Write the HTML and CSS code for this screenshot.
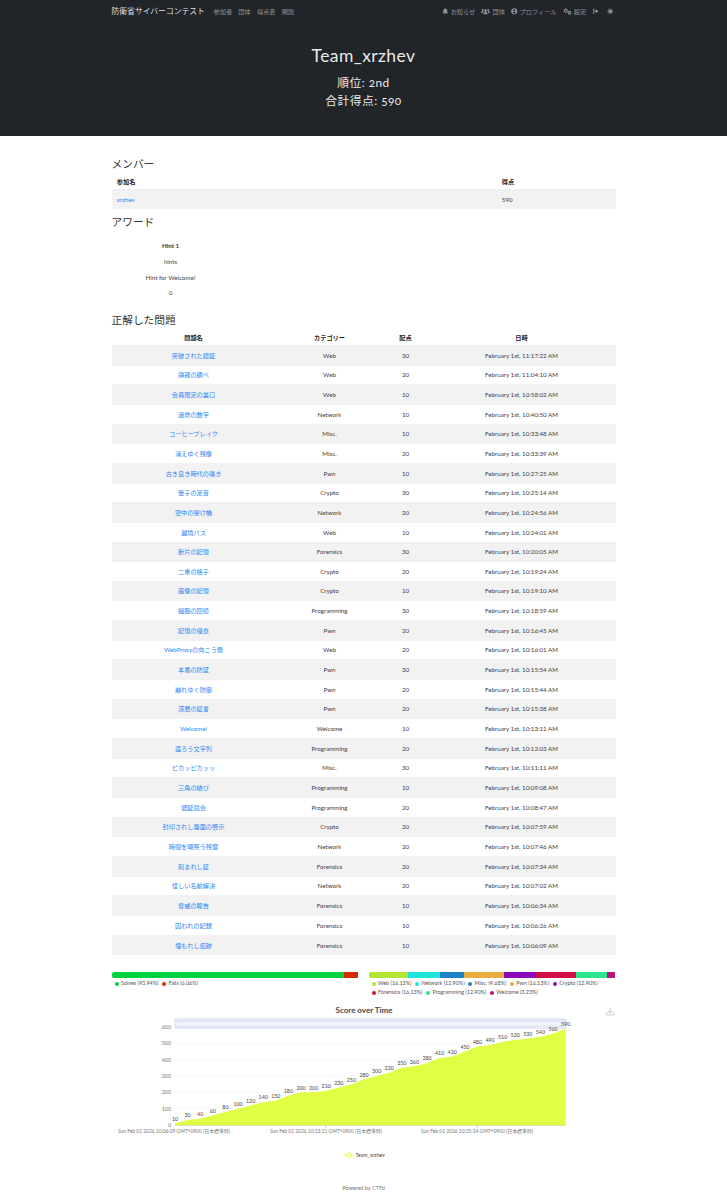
FILE: index.html
```html
<!DOCTYPE html>
<html lang="ja">
<head>
<meta charset="utf-8">
<title>Team_xrzhev</title>
<link rel="stylesheet" href="styles.css">
</head>
<body>
<header class="top">
  <nav class="nav container">
    <a class="brand">防衛省サイバーコンテスト</a>
    <a class="link first">参加者</a>
    <a class="link">団体</a>
    <a class="link">得点表</a>
    <a class="link">問題</a>
    <span class="spacer"></span>
    <a class="link"><svg class="icon" viewBox="0 0 8 8"><path d="M4 0a.6.6 0 0 1 .6.6v.4C6 1.3 6.4 2.4 6.4 3.6c0 1.3.4 1.8 1 2.4v.5H.6V6c.6-.6 1-1.1 1-2.4C1.6 2.4 2 1.3 3.4 1V.6A.6.6 0 0 1 4 0zM3.1 7h1.8a.9.9 0 0 1-1.8 0z"/></svg>お知らせ</a>
    <a class="link"><svg class="icon wide" viewBox="0 0 10 8"><circle cx="5" cy="3" r="1.5"/><circle cx="1.8" cy="2.2" r="1.1"/><circle cx="8.2" cy="2.2" r="1.1"/><path d="M2.6 7V6.2C2.6 5.2 3.4 4.8 5 4.8s2.4.4 2.4 1.4V7zM0 5.6V4.8c0-.8.6-1.1 1.8-1.1.4 0 .7 0 1 .2-.5.4-.9 1-.9 1.7zM10 5.6V4.800c0-.8-.6-1.100-1.800-1.100-.4 0-.7 0-1 .2.500.4.900 1 .9 1.700z"/></svg>団体</a>
    <a class="link"><svg class="icon" viewBox="0 0 8 8"><path fill-rule="evenodd" d="M4 .2a3.800 3.800 0 1 0 0 7.600A3.800 3.800 0 0 0 4 .2zm0 1.400a1.300 1.300 0 1 1 0 2.600 1.300 1.300 0 0 1 0-2.600zM4 6.900c-.9 0-1.700-.4-2.200-1 .3-.6 1-.9 1.500-.9.200 0 .4.100.7.100s.5-.1.700-.1c.5 0 1.200.3 1.500.9-.5.6-1.300 1-2.200 1z"/></svg>プロフィール</a>
    <a class="link"><svg class="icon wide" viewBox="0 0 10 8"><circle class="ring" cx="3" cy="3" r="1.700"/><circle class="ring" cx="7.300" cy="5.300" r="1.500"/></svg>設定</a>
    <a class="link"><svg class="icon" viewBox="0 0 8 8"><path d="M3 1H1.200v6H3V6H2.200V2H3zM4.800 1.600 8 4 4.800 6.400V5H3V3h1.800z"/></svg></a>
    <a class="link"><svg class="icon" viewBox="0 0 8 8"><circle cx="4" cy="4" r="2.300"/><path d="M4 0l.8 1.400H3.200zM4 8l.8-1.400H3.200zM0 4l1.400-.8v1.600zM8 4l-1.400-.8v1.600zM1.200 1.200l1.500.4-1.100 1.100zM6.800 6.800l-1.500-.4 1.100-1.100zM6.800 1.200l-.4 1.500-1.100-1.100zM1.200 6.800l.4-1.500 1.100 1.100z"/></svg></a>
  </nav>
  <div class="hero">
    <h1>Team_xrzhev</h1>
    <h2>順位: 2nd</h2>
    <h2>合計得点: 590</h2>
  </div>
</header>

<main class="container">
  <h3 class="first-head">メンバー</h3>
  <table class="members">
    <thead><tr><th>参加名</th><th>得点</th></tr></thead>
    <tbody><tr><td><a>xrzhev</a></td><td>590</td></tr></tbody>
  </table>

  <h3 class="award-head">アワード</h3>
  <div class="award">
    <p class="strong">Hint 1</p>
    <p>hints</p>
    <p>Hint for Welcome!</p>
    <p>0</p>
  </div>

  <h3 class="solved-head">正解した問題</h3>
  <table class="solves">
    <colgroup><col class="c1"><col class="c2"><col class="c3"><col class="c4"></colgroup>
    <thead><tr><th>問題名</th><th>カテゴリー</th><th>配点</th><th>日時</th></tr></thead>
    <tbody>
      <tr><td><a>突破された認証</a></td><td>Web</td><td>30</td><td>February 1st, 11:17:22 AM</td></tr>
      <tr><td><a>静寂の調べ</a></td><td>Web</td><td>20</td><td>February 1st, 11:04:10 AM</td></tr>
      <tr><td><a>会員限定の裏口</a></td><td>Web</td><td>10</td><td>February 1st, 10:58:02 AM</td></tr>
      <tr><td><a>運命の数字</a></td><td>Network</td><td>10</td><td>February 1st, 10:40:50 AM</td></tr>
      <tr><td><a>コーヒーブレイク</a></td><td>Misc.</td><td>10</td><td>February 1st, 10:33:48 AM</td></tr>
      <tr><td><a>消えゆく残像</a></td><td>Misc.</td><td>20</td><td>February 1st, 10:33:39 AM</td></tr>
      <tr><td><a>古き良き時代の囁き</a></td><td>Pwn</td><td>10</td><td>February 1st, 10:27:25 AM</td></tr>
      <tr><td><a>量子の足音</a></td><td>Crypto</td><td>30</td><td>February 1st, 10:25:14 AM</td></tr>
      <tr><td><a>空中の架け橋</a></td><td>Network</td><td>20</td><td>February 1st, 10:24:56 AM</td></tr>
      <tr><td><a>越境パス</a></td><td>Web</td><td>10</td><td>February 1st, 10:24:01 AM</td></tr>
      <tr><td><a>断片の記憶</a></td><td>Forensics</td><td>30</td><td>February 1st, 10:20:05 AM</td></tr>
      <tr><td><a>二重の格子</a></td><td>Crypto</td><td>20</td><td>February 1st, 10:19:24 AM</td></tr>
      <tr><td><a>画像の記憶</a></td><td>Crypto</td><td>10</td><td>February 1st, 10:19:10 AM</td></tr>
      <tr><td><a>細胞の回帰</a></td><td>Programming</td><td>30</td><td>February 1st, 10:18:59 AM</td></tr>
      <tr><td><a>記憶の侵食</a></td><td>Pwn</td><td>20</td><td>February 1st, 10:16:45 AM</td></tr>
      <tr><td><a>WebProxyの向こう側</a></td><td>Web</td><td>20</td><td>February 1st, 10:16:01 AM</td></tr>
      <tr><td><a>本番の防壁</a></td><td>Pwn</td><td>30</td><td>February 1st, 10:15:54 AM</td></tr>
      <tr><td><a>崩れゆく防御</a></td><td>Pwn</td><td>20</td><td>February 1st, 10:15:44 AM</td></tr>
      <tr><td><a>深層の証言</a></td><td>Pwn</td><td>20</td><td>February 1st, 10:15:38 AM</td></tr>
      <tr><td><a>Welcome!</a></td><td>Welcome</td><td>10</td><td>February 1st, 10:13:11 AM</td></tr>
      <tr><td><a>還ろう文字列</a></td><td>Programming</td><td>20</td><td>February 1st, 10:12:03 AM</td></tr>
      <tr><td><a>ピカッピカッッ</a></td><td>Misc.</td><td>30</td><td>February 1st, 10:11:11 AM</td></tr>
      <tr><td><a>三角の結び</a></td><td>Programming</td><td>10</td><td>February 1st, 10:09:08 AM</td></tr>
      <tr><td><a>認証競合</a></td><td>Programming</td><td>20</td><td>February 1st, 10:08:47 AM</td></tr>
      <tr><td><a>封印されし盤面の啓示</a></td><td>Crypto</td><td>20</td><td>February 1st, 10:07:59 AM</td></tr>
      <tr><td><a>時間を嘲笑う残響</a></td><td>Network</td><td>20</td><td>February 1st, 10:07:46 AM</td></tr>
      <tr><td><a>刻まれし証</a></td><td>Forensics</td><td>20</td><td>February 1st, 10:07:34 AM</td></tr>
      <tr><td><a>怪しい名前解決</a></td><td>Network</td><td>20</td><td>February 1st, 10:07:02 AM</td></tr>
      <tr><td><a>脅威の報告</a></td><td>Forensics</td><td>10</td><td>February 1st, 10:06:34 AM</td></tr>
      <tr><td><a>囚われの記録</a></td><td>Forensics</td><td>10</td><td>February 1st, 10:06:26 AM</td></tr>
      <tr><td><a>埋もれし痕跡</a></td><td>Forensics</td><td>10</td><td>February 1st, 10:06:09 AM</td></tr>
    </tbody>
  </table>

  <section class="percents">
    <div class="pct">
      <div class="bar">
        <span class="seg solves-c"></span><span class="seg fails-c"></span>
      </div>
      <ul class="legend">
        <li><i class="solves-c"></i>Solves (93.94%)</li>
        <li><i class="fails-c"></i>Fails (6.06%)</li>
      </ul>
    </div>
    <div class="pct">
      <div class="bar">
        <span class="seg web"></span><span class="seg network"></span><span class="seg misc"></span><span class="seg pwn"></span><span class="seg crypto"></span><span class="seg forensics"></span><span class="seg programming"></span><span class="seg welcome"></span>
      </div>
      <ul class="legend">
        <li><i class="web"></i>Web (16.13%)</li>
        <li><i class="network"></i>Network (12.90%)</li>
        <li><i class="misc"></i>Misc. (9.68%)</li>
        <li><i class="pwn"></i>Pwn (16.13%)</li>
        <li><i class="crypto"></i>Crypto (12.90%)</li>
        <li><i class="forensics"></i>Forensics (16.13%)</li>
        <li><i class="programming"></i>Programming (12.90%)</li>
        <li><i class="welcome"></i>Welcome (3.23%)</li>
      </ul>
    </div>
  </section>

  <svg class="chart" viewBox="0 0 504 170" width="504" height="170">
    <text class="title" x="252" y="13.500">Score over Time</text>
    <g class="save">
      <path d="M498 9v5M496 12l2 2 2-2M494.500 13.500v2.500h7v-2.500"/>
    </g>
    <g class="grid">
      <line x1="63" x2="454" y1="109.700" y2="109.700"/>
      <line x1="63" x2="454" y1="93.300" y2="93.300"/>
      <line x1="63" x2="454" y1="77" y2="77"/>
      <line x1="63" x2="454" y1="60.700" y2="60.700"/>
      <line x1="63" x2="454" y1="44.300" y2="44.300"/>
      <line x1="63" x2="454" y1="28" y2="28"/>
    </g>
    <g class="ylabels">
      <text x="59" y="128">0</text>
      <text x="59" y="111.700">100</text>
      <text x="59" y="95.300">200</text>
      <text x="59" y="79">300</text>
      <text x="59" y="62.700">400</text>
      <text x="59" y="46.300">500</text>
      <text x="59" y="30">600</text>
    </g>
    <g transform="translate(63 126) scale(12.6 -0.1633)">
      <polygon class="area" points="0,0 0,10 1,30 2,40 3,60 4,80 5,100 6,120 7,140 8,150 9,180 10,200 11,200 12,210 13,230 14,250 15,280 16,300 17,320 18,350 19,360 20,380 21,410 22,420 23,450 24,480 25,490 26,510 27,520 28,530 29,540 30,560 31,590 31,0"/>
    </g>
    <line class="axis" x1="63" x2="454" y1="126.500" y2="126.500"/>
    <g class="ticks">
      <line x1="214" x2="214" y1="126.500" y2="129"/>
      <line x1="365" x2="365" y1="126.500" y2="129"/>
    </g>
    <g class="slider">
      <rect class="band" x="63" y="19.500" width="391" height="10"/>
      <rect class="inner" x="63" y="23" width="391" height="3.500"/>
      <rect class="handle" x="62.500" y="22" width="1.500" height="5" rx=".7"/>
      <rect class="handle" x="453.500" y="22" width="1.500" height="5" rx=".7"/>
    </g>
    <g class="vals" transform="translate(63 127.300)">
      <text x="0" y="-5.600">10</text><text x="12.600" y="-8.900">30</text><text x="25.200" y="-10.500">40</text><text x="37.800" y="-13.800">60</text><text x="50.400" y="-17.100">80</text><text x="63" y="-20.300">100</text><text x="75.600" y="-23.600">120</text><text x="88.200" y="-26.900">140</text><text x="100.800" y="-28.500">150</text><text x="113.400" y="-33.400">180</text><text x="126" y="-36.700">200</text><text x="138.600" y="-36.700">200</text><text x="151.200" y="-38.300">210</text><text x="163.800" y="-41.600">230</text><text x="176.400" y="-44.800">250</text><text x="189" y="-49.700">280</text><text x="201.600" y="-53">300</text><text x="214.200" y="-56.300">320</text><text x="226.800" y="-61.200">350</text><text x="239.400" y="-62.800">360</text><text x="252" y="-66.100">380</text><text x="264.600" y="-71">410</text><text x="277.200" y="-72.600">420</text><text x="289.800" y="-77.500">450</text><text x="302.400" y="-82.400">480</text><text x="315" y="-84">490</text><text x="327.600" y="-87.300">510</text><text x="340.200" y="-88.900">520</text><text x="352.800" y="-90.500">530</text><text x="365.400" y="-92.200">540</text><text x="378" y="-95.400">560</text><text x="390.600" y="-100.300">590</text>
    </g>
    <g class="xlabels">
      <text x="62" y="134.300">Sun Feb 01 2026 10:06:09 GMT+0900 (日本標準時)</text>
      <text x="214" y="134.300">Sun Feb 01 2026 10:13:11 GMT+0900 (日本標準時)</text>
      <text x="365" y="134.300">Sun Feb 01 2026 10:25:14 GMT+0900 (日本標準時)</text>
    </g>
    <g class="series-key">
      <line x1="232" x2="241.500" y1="156.300" y2="156.300"/>
      <circle cx="236.800" cy="156.300" r="2.100"/>
      <text x="243.500" y="158">Team_xrzhev</text>
    </g>
  </svg>
</main>

<footer class="foot">Powered by CTFd</footer>
</body>
</html>
```
FILE: styles.css
```css
* { box-sizing: border-box; }
html, body { margin: 0; padding: 0; }
body {
  background: #fff;
  color: #3d3d3d;
  font-family: Lato, "Noto Sans CJK JP", sans-serif;
  font-size: 6.2px;
  line-height: 1.5;
}
.container { width: 504px; margin: 0 auto; }
a { color: #2a86f7; text-decoration: none; }

.top { background: #212529; height: 136px; color: #f2f2f2; }
.nav { display: flex; align-items: center; height: 23px; color: #8f9294; font-size: 6.2px; gap: 6.2px; }
.nav a { color: inherit; }
.nav a.brand { color: #dedfe0; font-size: 7.800px; margin-right: 2.500px; }
.spacer { flex: 1; }
.link { display: inline-flex; align-items: center; white-space: nowrap; }
.icon { width: 6.500px; height: 6.500px; margin-right: 2px; fill: #8f9294; }
.icon.wide { width: 9px; height: 7px; }
.ring { fill: none; stroke: #8f9294; stroke-width: 1.300; }

.hero { text-align: center; padding-top: 19.500px; }
.hero h1 { margin: 0; font-size: 17.500px; font-weight: 400; line-height: 26px; letter-spacing: .4px; color: #e8e9ea; }
.hero h2 { margin: 0; font-size: 11.800px; font-weight: 400; line-height: 18px; font-variant-numeric: oldstyle-nums; letter-spacing: .45px; color: #e8e9ea; }
.hero h1 + h2 { margin-top: 5px; }

h3 { margin: 0; font-size: 10.700px; font-weight: 400; line-height: 14px; color: #333; }
.first-head { margin-top: 21px; }
.award-head { margin-top: 6px; }
.solved-head { margin-top: 12px; }

table { width: 100%; border-collapse: collapse; table-layout: fixed; }
th { font-weight: 700; color: #222; }
.members th, .members td { text-align: left; padding: 0 5.300px; }
.members th:last-child, .members td:last-child { width: 119px; }
.members thead tr { height: 18.500px; }
.members th { padding-top: 3px; vertical-align: middle; }
.members tbody tr { height: 19.700px; background: #f2f2f2; }
.members tbody td { border-top: 1px solid #eceef0; }

.award { width: 118px; text-align: center; margin-top: 9px; }
.award p { margin: 0; height: 15.700px; line-height: 15.700px; color: #444; }
.award p.strong { font-weight: 700; color: #333; }

.solves th, .solves td { text-align: center; padding: 0; }
.solves thead tr { height: 18.500px; }
.solves th { padding-top: 3px; }
.solves tbody tr { height: 19.670px; }
.solves tbody tr:nth-child(odd) { background: #f2f2f2; }
.solves tbody td { border-top: 1px solid #f0f1f2; }
.c1 { width: 164px; }
.c2 { width: 108px; }
.c3 { width: 44px; }
.c4 { width: 188px; }

.percents { display: flex; gap: 10px; margin-top: 17.500px; }
.pct { flex: 1; min-width: 0; }
.bar { display: flex; height: 6px; border-radius: 2px; overflow: hidden; }
.seg { display: block; height: 100%; }
.seg.solves-c { flex: 0 0 93.940%; }
.seg.fails-c { flex: 0 0 6.060%; }
.seg.web { flex: 0 0 16.130%; }
.seg.network { flex: 0 0 12.900%; }
.seg.misc { flex: 0 0 9.680%; }
.seg.pwn { flex: 0 0 16.130%; }
.seg.crypto { flex: 0 0 12.900%; }
.seg.forensics { flex: 0 0 16.130%; }
.seg.programming { flex: 0 0 12.900%; }
.seg.welcome { flex: 0 0 3.230%; }
.solves-c { background: #00d13f; }
.fails-c { background: #d42c00; }
.web { background: #b4e533; }
.network { background: #1ee6dc; }
.misc { background: #1c84c6; }
.pwn { background: #e8ac40; }
.crypto { background: #8a0cbd; }
.forensics { background: #d30d46; }
.programming { background: #2ee58f; }
.welcome { background: #b8127f; }

.legend { list-style: none; margin: .5px 0 0; padding: 0 0 0 3px; display: flex; flex-wrap: wrap; font-size: 5.400px; line-height: 9.500px; color: #555; column-gap: 3.500px; }
.legend li { display: flex; align-items: center; white-space: nowrap; }
.legend i { display: block; width: 4px; height: 4px; border-radius: 50%; margin-right: 2.500px; }

.chart { display: block; margin-top: 1px; overflow: visible; }
.chart text { font-family: Lato, "Noto Sans CJK JP", sans-serif; }
.title { font-size: 8px; font-weight: 700; text-anchor: middle; fill: #464646; }
.save path { fill: none; stroke: #a4a9ad; stroke-width: .6; }
.grid line { stroke: #eef1f6; stroke-width: .6; }
.ylabels text { font-size: 5.300px; text-anchor: end; fill: #777; }
.area { fill: #dfff45; }
.axis { stroke: #c4cf7e; stroke-width: .6; }
.ticks line { stroke: #9aa; stroke-width: .5; }
.band { fill: #e3e8f6; stroke: #dde3f1; stroke-width: .5; }
.inner { fill: #f1f4fb; }
.handle { fill: #fff; stroke: #bcc6da; stroke-width: .4; }
.vals text { font-size: 5.300px; text-anchor: middle; fill: #444; }
.xlabels text { font-size: 4.900px; text-anchor: middle; fill: #777; }
.series-key line { stroke: #dfff20; stroke-width: .9; }
.series-key circle { fill: #fff; stroke: #dfff20; stroke-width: .9; }
.series-key text { font-size: 5.200px; fill: #444; }

.foot { text-align: center; font-size: 5.500px; color: #777; margin-top: 12px; height: 14px; line-height: 14px; }
```
